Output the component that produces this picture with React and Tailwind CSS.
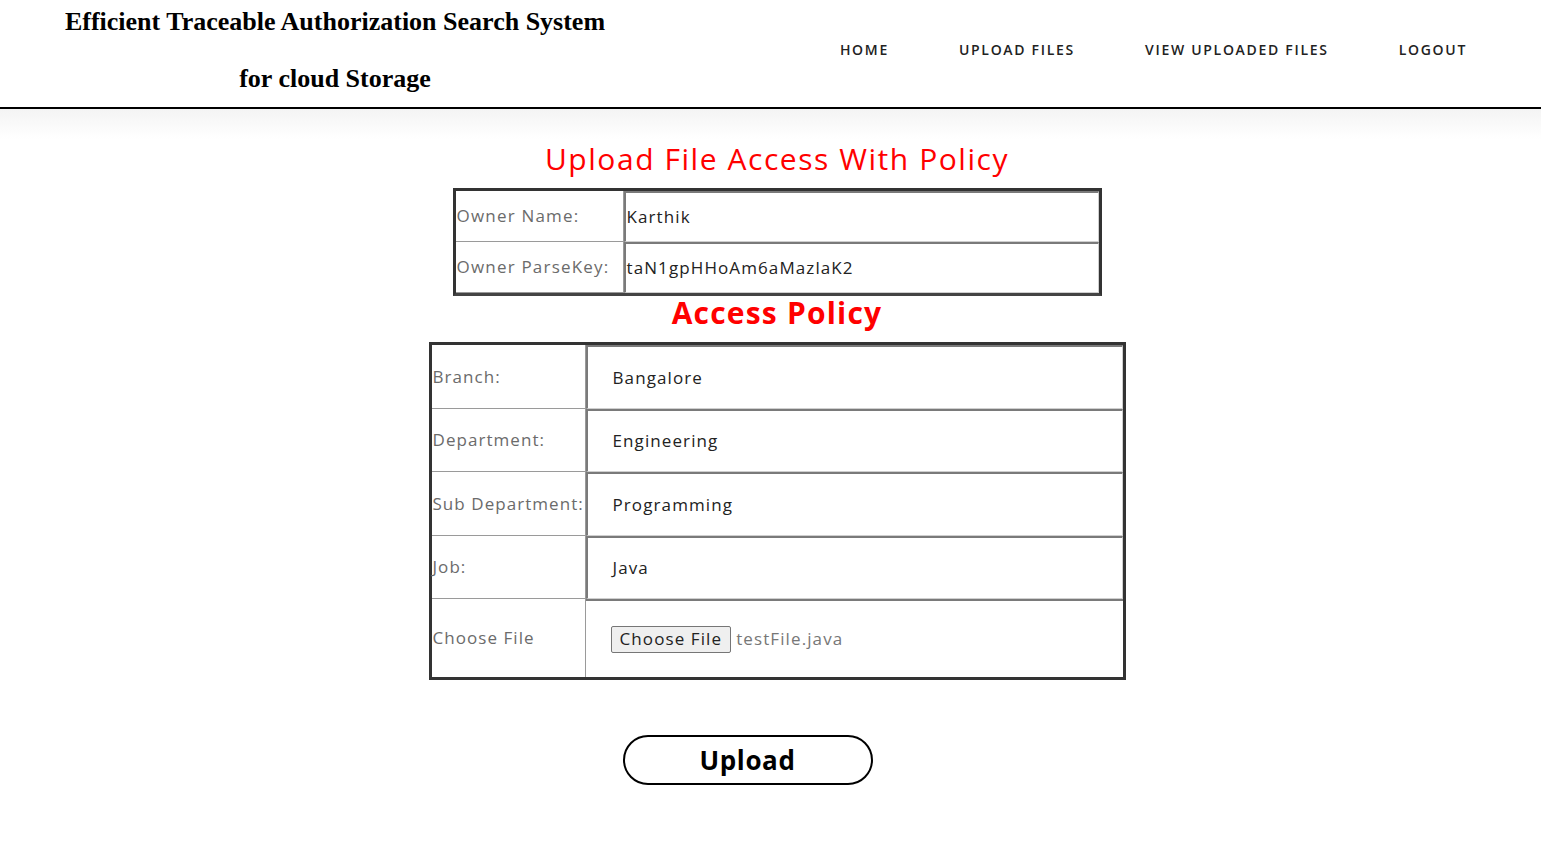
import React from "react";

const sans = { fontFamily: '"Open Sans", "Noto Sans", sans-serif' };

function Row1({ label, value }) {
  return (
    <div className="flex h-[51px]">
      <div className="w-[168px] border-r border-b border-[#9a9a9a] flex items-center text-[17px] tracking-[1.2px] text-[#6b6b6b] pl-[1px] whitespace-nowrap">{label}</div>
      <div className="flex-1 border-t-2 border-l-2 border-r border-b border-t-[#7a7a7a] border-l-[#7a7a7a] border-r-[#cfcfcf] border-b-[#cfcfcf] flex items-center text-[17px] tracking-[1.1px] text-[#222] pl-[1px]">{value}</div>
    </div>
  );
}

function Row2({ label, children, h }) {
  return (
    <div className={`flex ${h}`}>
      <div className="w-[154px] border-r border-b border-[#9a9a9a] flex items-center text-[17px] tracking-[1.05px] text-[#6b6b6b] pl-[1px] whitespace-nowrap">{label}</div>
      <div className="flex-1 border-t-2 border-l-2 border-r border-b border-t-[#7a7a7a] border-l-[#7a7a7a] border-r-[#cfcfcf] border-b-[#cfcfcf] flex items-center text-[17px] tracking-[1.1px] text-[#222] pl-[25px]">{children}</div>
    </div>
  );
}

export default function App() {
  return (
    <div className="min-h-[842px] bg-white" style={sans}>
      <header className="h-[109px] border-b-2 border-black flex">
        <div className="w-[670px] flex flex-col items-center pt-[7px]" style={{ fontFamily: '"Liberation Serif", serif' }}>
          <div className="text-[26px] font-bold leading-[30px] text-black whitespace-nowrap">Efficient Traceable Authorization Search System</div>
          <div className="text-[26px] font-bold leading-[30px] text-black mt-[27px]">for cloud Storage</div>
        </div>
        <nav className="flex-1 flex justify-end items-start pt-[39px] pr-[74px] gap-[70px] text-[14px] font-semibold text-[#222] tracking-[1.7px] whitespace-nowrap">
          <span>HOME</span>
          <span>UPLOAD FILES</span>
          <span>VIEW UPLOADED FILES</span>
          <span>LOGOUT</span>
        </nav>
      </header>
      <div className="h-[30px] bg-gradient-to-b from-[#f4f4f4] to-white" />
      <main className="flex flex-col items-center pl-[13px]">
        <h1 className="text-[30px] leading-[42px] text-[#ff0000] font-normal tracking-[1.55px] -mt-[1px]">Upload File Access With Policy</h1>
        <div className="w-[649px] border-[3px] border-[#333] border-b-[#444] mt-[8px]">
          <Row1 label="Owner Name:" value="Karthik" />
          <Row1 label="Owner ParseKey:" value="taN1gpHHoAm6aMazlaK2" />
        </div>
        <h2 className="text-[30px] leading-[36px] font-bold text-[#ff0000] tracking-[1.2px] -mt-[1px]">Access Policy</h2>
        <div className="w-[697px] border-[3px] border-[#333] mt-[11px]">
          <Row2 label="Branch:" h="h-[64px]">Bangalore</Row2>
          <Row2 label="Department:" h="h-[63px]">Engineering</Row2>
          <Row2 label="Sub Department:" h="h-[64px]">Programming</Row2>
          <Row2 label="Job:" h="h-[63px]">Java</Row2>
          <div className="flex h-[78px]">
            <div className="w-[154px] border-r border-[#9a9a9a] flex items-center text-[17px] tracking-[1.05px] text-[#6b6b6b] pl-[1px]">Choose File</div>
            <div className="flex-1 border-t-2 border-t-[#7a7a7a] flex items-center pl-[25px] text-[17px] tracking-[1.1px]">
              <span className="border border-[#767676] bg-[#efefef] rounded-[2px] px-[8px] h-[27px] flex items-center text-[#222]">Choose File</span>
              <span className="ml-[5px] text-[#777]">testFile.java</span>
            </div>
          </div>
        </div>
        <button className="mt-[55px] w-[250px] h-[50px] rounded-full border-2 border-black text-[26px] font-bold text-black tracking-[0.6px] flex items-center justify-center -ml-[59px]">Upload</button>
      </main>
    </div>
  );
}
